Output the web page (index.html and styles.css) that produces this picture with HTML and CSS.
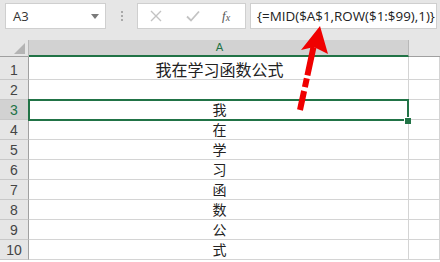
FILE: index.html
```html
<!DOCTYPE html>
<html>
<head>
<meta charset="utf-8">
<link rel="stylesheet" href="styles.css">
</head>
<body>
<div class="app">
  <div class="toolbar">
    <div class="namebox">
      <span class="ref">A3</span>
      <svg class="drop" width="8" height="5" viewBox="0 0 8 5"><path d="M0 0H8L4 5Z" fill="#7a7a7a"/></svg>
    </div>
    <div class="grip"><i></i><i></i><i></i></div>
    <div class="tools">
      <svg class="ico" width="12" height="12" viewBox="0 0 12 12"><path d="M1 1L11 11M11 1L1 11" stroke="#c3c3c3" stroke-width="1.4" fill="none"/></svg>
      <svg class="ico" width="14" height="12" viewBox="0 0 14 12"><path d="M1 6.5L5 10.5L13 1.5" stroke="#c3c3c3" stroke-width="1.8" fill="none"/></svg>
      <span class="fx">f<sub>x</sub></span>
    </div>
    <div class="formula">{=MID($A$1,ROW($1:$99),1)}</div>
  </div>
  <div class="sheet">
    <div class="corner"><svg width="11" height="11" viewBox="0 0 11 11"><path d="M11 0V11H0Z" fill="#b4b4b4"/></svg></div>
    <div class="colhead sel">A</div>
    <div class="colhead"></div>

    <div class="rowhead r1">1</div><div class="cell title">我在学习函数公式</div><div class="cell"></div>
    <div class="rowhead">2</div><div class="cell"></div><div class="cell"></div>
    <div class="rowhead sel">3</div><div class="cell">我</div><div class="cell"></div>
    <div class="rowhead">4</div><div class="cell">在</div><div class="cell"></div>
    <div class="rowhead">5</div><div class="cell">学</div><div class="cell"></div>
    <div class="rowhead">6</div><div class="cell">习</div><div class="cell"></div>
    <div class="rowhead">7</div><div class="cell">函</div><div class="cell"></div>
    <div class="rowhead">8</div><div class="cell">数</div><div class="cell"></div>
    <div class="rowhead">9</div><div class="cell">公</div><div class="cell"></div>
    <div class="rowhead">10</div><div class="cell">式</div><div class="cell"></div>

    <div class="selection"></div>
    <div class="handle"></div>
  </div>
  <svg class="arrow" width="440" height="262" viewBox="0 0 440 262">
    <path d="M320 26L328 54L314 47L301 50Z" fill="#f00000"/>
    <path d="M313.5 47L300 110" stroke="#f00000" stroke-width="6" fill="none" stroke-dasharray="29 3 9 4 30"/>
  </svg>
</div>
</body>
</html>
```
FILE: styles.css
```css
* { box-sizing: border-box; }
html, body { margin: 0; padding: 0; }
body { background: #e6e6e6; width: 440px; height: 262px; overflow: hidden; }
.app { position: relative; width: 440px; height: 262px; overflow: hidden; }

.toolbar {
  height: 40px;
  display: flex;
  align-items: flex-start;
  padding: 3px 0 0 5px;
  background: #e6e6e6;
}
.namebox {
  width: 101px;
  height: 26px;
  background: #fff;
  border: 1px solid #cfcfcf;
  display: flex;
  align-items: center;
  justify-content: space-between;
  padding: 0 6px 0 7px;
}
.ref { font: 13px "Open Sans", "Liberation Sans", sans-serif; color: #333; }
.grip {
  margin-left: 15px;
  width: 3px;
  height: 26px;
  display: flex;
  flex-direction: column;
  justify-content: center;
  gap: 2px;
}
.grip i { display: block; width: 2px; height: 2px; background: #a9a9a9; }
.tools {
  margin-left: 13px;
  width: 109px;
  height: 26px;
  background: #fff;
  border: 1px solid #cfcfcf;
  display: flex;
  align-items: center;
  padding-left: 12px;
}
.tools .ico:first-child { margin-right: 24px; }
.tools .ico:nth-child(2) { margin-right: 22px; }
.fx {
  font: italic 13px "Liberation Serif", serif;
  color: #555;
}
.fx sub { font-size: 10px; vertical-align: -1px; }
.formula {
  margin-left: 4px;
  width: 187px;
  height: 26px;
  background: #fff;
  border: 1px solid #cfcfcf;
  padding-left: 6px;
  font: 13.4px "Open Sans", "Liberation Sans", sans-serif;
  color: #222;
  line-height: 24px;
  white-space: nowrap;
}

.sheet {
  position: relative;
  display: grid;
  grid-template-columns: 29px 380px 1fr;
  grid-template-rows: 17px 23px repeat(9, 20px);
  background: #fff;
  height: 222px;
}
.corner {
  background: #e6e6e6;
  border-right: 1px solid #b8b8b8;
  border-bottom: 1px solid #a0a0a0;
  display: flex;
  justify-content: flex-end;
  align-items: flex-end;
  padding: 0 3px 2px 0;
}
.corner svg { display: block; }
.colhead {
  background: #e6e6e6;
  border-bottom: 1px solid #a0a0a0;
  font: 11px "DejaVu Sans", sans-serif;
  color: #217346;
  text-align: center;
  line-height: 17px;
}
.colhead.sel {
  background: #d2d2d2;
  border-right: 1px solid #b8b8b8;
  border-bottom: 2px solid #217346;
  line-height: 15px;
  padding-left: 2px;
}
.rowhead {
  background: #e6e6e6;
  border-right: 1px solid #a0a0a0;
  border-bottom: 1px solid #c8c8c8;
  font: 14px "Liberation Sans", sans-serif;
  color: #444;
  text-align: center;
  display: flex;
  align-items: flex-end;
  justify-content: center;
  padding-bottom: 1px;
}
.rowhead.sel { background: #d2d2d2; color: #217346; }
.cell {
  border-right: 1px solid #d4d4d4;
  border-bottom: 1px solid #d4d4d4;
  font: 14px "Noto Sans CJK SC", sans-serif;
  color: #222;
  text-align: center;
  line-height: 19px;
  padding-left: 2px;
}
.cell.title { font-size: 16px; line-height: 24px; padding-left: 2px; }

.selection {
  position: absolute;
  left: 28px;
  top: 59px;
  width: 381px;
  height: 22px;
  border: 2px solid #217346;
  pointer-events: none;
}
.handle {
  position: absolute;
  left: 405px;
  top: 78px;
  width: 6px;
  height: 6px;
  background: #217346;
  box-shadow: -1px -1px 0 #fff;
}
.arrow { position: absolute; left: 0; top: 0; pointer-events: none; }
```
